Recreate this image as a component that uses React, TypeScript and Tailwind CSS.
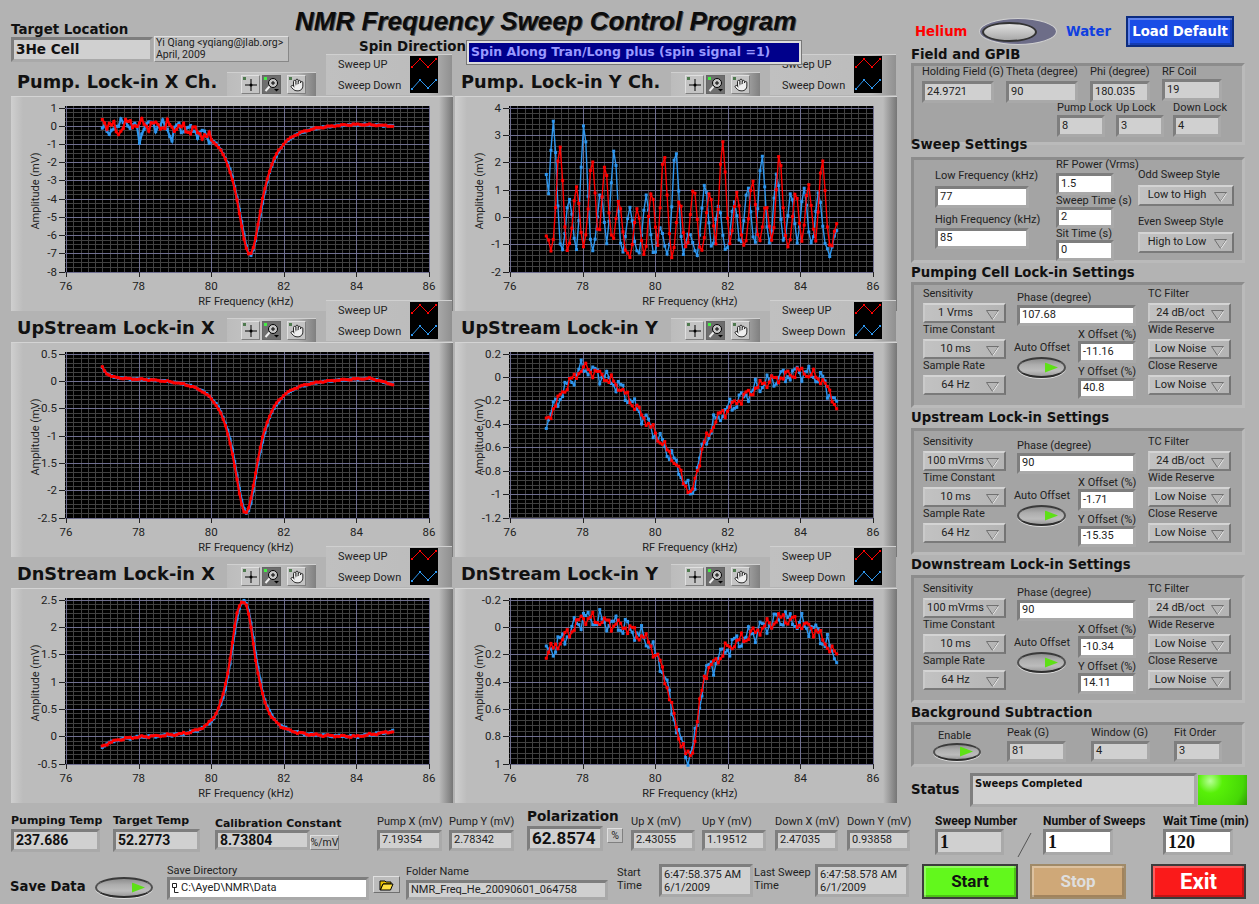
import { Hand } from 'lucide-react'

const FREQS = Array.from({ length: 126 }, (_, i) => 77 + i * 0.064)

const lerp = (knots: number[][], x: number) => {
  for (let i = 1; i < knots.length; i++) {
    if (x <= knots[i][0]) {
      const [a, b] = [knots[i - 1], knots[i]]
      return a[1] + ((x - a[0]) / (b[0] - a[0])) * (b[1] - a[1])
    }
  }
  return knots[knots.length - 1][1]
}

const wobble = (x: number, ph: number) => Math.sin(x * 17 + ph) * 0.55 + Math.sin(x * 43 + ph * 2) * 0.3 + Math.sin(x * 71 + ph * 3) * 0.15
const lorentz = (x: number, c: number, w: number, p = 2) => 1 / (1 + Math.abs((x - c) / w) ** p)
const dip = (x: number, c: number) => Math.exp(-(((x - c) / 0.08) ** 2))

const pumpX = (ph: number, dx: number) => (x: number) =>
  0.22 - 7.3 * lorentz(x - dx, 81.06, 0.42) - Math.max(0, x - 84) * 0.15 + wobble(x, ph) * (x < 80 ? 0.4 : 0.05) -
  (dx > 0 ? 0.9 * (dip(x, 77.2) + dip(x, 78.02)) + 0.6 * dip(x, 78.9) : 0.7 * dip(x, 77.42))
const upX = (ph: number, dx: number) => (x: number) =>
  0.08 - 2.5 * lorentz(x - dx, 80.95, 0.42) + 0.2 * Math.exp(-(x - 77) / 0.15) - Math.max(0, x - 84.4) * 0.2 + wobble(x, ph) * 0.015
const dnX = (ph: number, dx: number) => (x: number) =>
  -0.02 + 2.48 * lorentz(x - dx, 80.87, 0.4, 2.5) - 0.18 * Math.exp(-(x - 77) / 0.4) + 0.1 * Math.max(0, x - 84) + wobble(x, ph) * 0.025

const upYKnots = [[77, -0.38], [77.5, -0.1], [78, 0.08], [78.5, 0.02], [79, -0.08], [79.7, -0.35], [80.5, -0.7], [81, -1.02], [81.3, -0.6], [81.7, -0.35], [82.3, -0.2], [83, -0.05], [84, 0.05], [84.6, -0.02], [85, -0.25]]
const dnYKnots = [[77, 0.2], [77.5, 0.08], [78, -0.07], [79.2, 0], [79.8, 0.1], [80.2, 0.3], [80.6, 0.75], [80.85, 0.95], [81.05, 0.9], [81.35, 0.35], [82, 0.15], [83, 0], [83.5, -0.07], [84.4, 0.02], [85, 0.22]]
const upY = (ph: number, amp: number) => (x: number) => lerp(upYKnots, x) + wobble(x, ph) * amp
const dnY = (ph: number, amp: number) => (x: number) => lerp(dnYKnots, x) + wobble(x, ph) * amp

const redPeaks = [[77, -0.7], [77.37, 2.6], [77.83, 1.1], [78.26, 2.1], [78.62, 1.9], [79, 0.6], [79.5, 0.3], [79.9, 0.9], [80.24, 2.3], [80.67, 0.6], [81.06, 1.05], [81.5, 0.9], [81.86, 2.75], [82.25, 0.9], [82.68, 1.35], [83.05, 0.45], [83.42, 2.3], [83.87, 0.9], [84.22, 1.2], [84.6, 2.1], [85, -0.25]]
const bluePeaks = [[77, 1.55], [77.19, 3.5], [77.63, 0.65], [78.04, 3.4], [78.5, 0.9], [78.87, 2.45], [79.3, 0.35], [79.75, 0.8], [80.14, -0.4], [80.56, 2.45], [80.93, -0.6], [81.37, 1.2], [81.75, 0.4], [82.18, 0.55], [82.55, 1.1], [82.94, 2.25], [83.35, 1.6], [83.74, 0.9], [84.1, 1.05], [84.5, 0.9], [85, -0.5]]
const spikes = (peaks: number[][], ph: number) => (x: number) => {
  const base = -1.35 + wobble(x, ph) * 0.25 - (x < 80.8 && x > 79 ? 0.2 : 0)
  return Math.max(base, ...peaks.map(([c, p]) => base + (p - base) * Math.exp(-(((x - c) / 0.125) ** 2))))
}

type PlotProps = {
  ticks: number[]
  sub: number
  down: (x: number) => number
  up: (x: number) => number
  thick?: boolean
}

function Plot({ ticks, sub, down, up, thick }: PlotProps) {
  const x0 = 55
  const x1 = 418
  const y0 = 10.5
  const y1 = 174.5
  const top = ticks[0]
  const bottom = ticks[ticks.length - 1]
  const sx = (v: number) => x0 + ((v - 76) / 10) * (x1 - x0)
  const sy = (v: number) => y0 + ((top - v) / (bottom - top)) * (y0 - y1)
  const xTicks = [76, 78, 80, 82, 84, 86]
  const rowH = (y1 - y0) / (ticks.length - 1) / sub
  const minorY = Array.from({ length: (ticks.length - 1) * sub + 1 }, (_, i) => Math.round(y0 + i * rowH) + 0.5)
  const minorX = Array.from({ length: 51 }, (_, i) => Math.round(x0 + (i * (x1 - x0)) / 50) + 0.5)
  const line = (fn: (x: number) => number) => FREQS.map((f) => `${sx(f).toFixed(1)},${sy(fn(f)).toFixed(1)}`).join(' ')
  const trace = (fn: (x: number) => number, color: string) => (
    <g>
      <polyline points={line(fn)} fill="none" stroke={color} strokeWidth={thick ? 2.2 : 1.4} />
      {FREQS.map((f) => (
        <rect key={f} x={sx(f) - 1.5} y={sy(fn(f)) - 1.5} width={3} height={3} fill={color} />
      ))}
    </g>
  )
  return (
    <svg width={442} height={215} className="block">
      <rect x={54} y={9} width={365} height={166} fill="#000" />
      <g shapeRendering="crispEdges">
        {minorX.map((x) => (
          <line key={x} x1={x} x2={x} y1={9} y2={175} stroke="#414141" />
        ))}
        {minorY.map((y) => (
          <line key={y} x1={54} x2={419} y1={y} y2={y} stroke="#414141" />
        ))}
        {xTicks.map((t) => (
          <line key={t} x1={Math.round(sx(t)) + 0.5} x2={Math.round(sx(t)) + 0.5} y1={9} y2={175} stroke="#6f6f90" />
        ))}
        {ticks.map((t) => (
          <line key={t} x1={54} x2={419} y1={Math.round(sy(t)) + 0.5} y2={Math.round(sy(t)) + 0.5} stroke="#6f6f90" />
        ))}
        {xTicks.map((t) => (
          <line key={t} x1={Math.round(sx(t)) + 0.5} x2={Math.round(sx(t)) + 0.5} y1={175} y2={180} stroke="#222" />
        ))}
        {ticks.map((t) => (
          <line key={t} x1={48} x2={54} y1={Math.round(sy(t)) + 0.5} y2={Math.round(sy(t)) + 0.5} stroke="#222" />
        ))}
      </g>
      {trace(down, '#2e96ee')}
      {trace(up, '#ff0000')}
      {ticks.map((t) => (
        <text key={t} x={46} y={sy(t) + 4} textAnchor="end" fill="#222" className="text-[11.5px]">
          {t}
        </text>
      ))}
      {xTicks.map((t) => (
        <text key={t} x={sx(t)} y={193} textAnchor="middle" fill="#222" className="text-[11.5px]">
          {t}
        </text>
      ))}
      <text x={235} y={208} textAnchor="middle" fill="#222" className="text-[11px]">
        RF Frequency (kHz)
      </text>
      <text transform="translate(28 94) rotate(-90)" textAnchor="middle" fill="#222" className="text-[11px]">
        Amplitude (mV)
      </text>
    </svg>
  )
}

function ToolButton({ children, pressed }: { children: React.ReactNode; pressed?: boolean }) {
  return (
    <div
      className={
        pressed
          ? 'relative flex h-[19px] w-[19px] items-center justify-center border border-[#666] bg-[#6e6e6e]'
          : 'relative flex h-[19px] w-[19px] items-center justify-center border border-t-[#e0e0e0] border-l-[#e0e0e0] border-r-[#808080] border-b-[#808080] bg-[#c4c4c4]'
      }
    >
      {children}
    </div>
  )
}

function Toolbar() {
  return (
    <div className="mt-[7px] flex h-[24px] w-[89px] items-center gap-[2px] border-t border-t-[#d0d0d0] bg-[linear-gradient(90deg,#bcbcbc_0%,#c6c6c6_40%,#b0b0b0_80%,#808080_100%)] pl-[14px]">
      <ToolButton>
        <svg width="17" height="17" viewBox="0 0 17 17">
          <rect x="1" y="1" width="3" height="3" fill="#4f7a4f" />
          <path d="M9 3v12M3 9h12" stroke="#000" fill="none" />
          <circle cx="9" cy="9" r="1.5" fill="#000" />
        </svg>
      </ToolButton>
      <ToolButton pressed>
        <svg width="17" height="17" viewBox="0 0 17 17">
          <rect x="1" y="1" width="3" height="3" fill="#44ee44" />
          <circle cx="10" cy="7" r="4.5" fill="#c8c8c8" stroke="#000" />
          <path d="M8 7h4M10 5v4" stroke="#000" fill="none" />
          <path d="M6.5 10.5L2.5 15" stroke="#eee" strokeWidth="2" />
          <path d="M11 13h5l-2.500 2.500z" fill="#000" />
        </svg>
      </ToolButton>
      <div className="w-[2px]" />
      <ToolButton>
        <div className="absolute left-[1px] top-[1px] h-[3px] w-[3px] bg-[#4f7a4f]" />
        <Hand size={14} strokeWidth={1.4} color="#000" fill="#eee" />
      </ToolButton>
    </div>
  )
}

function Legend() {
  return (
    <div className="absolute left-[315px] top-[-11px] z-10 flex h-[41px] w-[126px] border-t border-t-[#d0d0d0] bg-[linear-gradient(90deg,#c0c0c0_0%,#bcbcbc_80%,#909090_100%)] pl-[12px] pt-[1px] text-[11px] leading-[21px] text-[#222]">
      <div className="-mt-[2px] w-[72px] whitespace-nowrap">
        <div>Sweep UP</div>
        <div>Sweep Down</div>
      </div>
      <svg width="28" height="37" className="bg-black">
        <polyline points="2,11 10,3 18,11 26,3" fill="none" stroke="#ff0000" />
        <path d="M1 10h2v2H1zM9 2h2v2H9zM17 10h2v2h-2zM25 2h2v2h-2z" fill="#ff0000" />
        <polyline points="2,33 10,24 18,32 26,24" fill="none" stroke="#2e96ee" />
        <path d="M1 32h2v2H1zM9 23h2v2H9zM17 31h2v2h-2zM25 23h2v2h-2z" fill="#2e96ee" />
      </svg>
    </div>
  )
}

function Graph({ title, ...plot }: PlotProps & { title: string }) {
  return (
    <div className="relative w-[442px]">
      <div className="flex h-[31px] w-[442px]">
        <div className={`${HEAD} mt-[3px] w-[216px] whitespace-nowrap pl-[6px] text-[17.75px] leading-[28px] text-[#111]`}>{title}</div>
        <Toolbar />
      </div>
      <Legend />
      <div className="h-[215px] w-[442px] border-t border-t-[#d4d4d4] bg-[linear-gradient(90deg,#cfcfcf_0px,#bcbcbc_12px,#bcbcbc_428px,#767676_442px)]">
        <Plot {...plot} />
      </div>
    </div>
  )
}

function Box({ value, className, white, textClass }: { value: string; className: string; white?: boolean; textClass?: string }) {
  return (
    <div
      className={`flex items-center whitespace-nowrap border-[3px] border-t-[#7e7e7e] border-l-[#7e7e7e] border-r-[#a9a9a9] border-b-[#a9a9a9] pl-[2px] ${white ? 'bg-white' : 'bg-[#d0d0d0]'} ${textClass ?? 'text-[11px] text-[#222]'} ${className}`}
    >
      {value}
    </div>
  )
}

function Label({ children, className }: { children: React.ReactNode; className?: string }) {
  return <div className={`h-[12px] whitespace-nowrap text-[11px] leading-[12px] text-[#222] ${className ?? ''}`}>{children}</div>
}

function Caret() {
  return (
    <svg width="13" height="10" viewBox="0 0 13 10" className="absolute right-[5px] top-[5px]">
      <path d="M0.500 0.500h12L6.500 9.500z" fill="none" stroke="#707070" />
      <path d="M12.500 1.500L7 9.500" stroke="#eee" fill="none" />
    </svg>
  )
}

function Select({ value, className }: { value: string; className?: string }) {
  return (
    <div
      className={`relative flex h-[20px] items-center border-2 border-t-[#d4d4d4] border-l-[#cacaca] border-r-[#747474] border-b-[#7a7a7a] bg-[linear-gradient(90deg,#c2c2c2,#b4b4b4)] pl-[2px] pr-[20px] text-[11px] text-[#222] ${className ?? ''}`}
    >
      <span className="w-full whitespace-nowrap text-center">{value}</span>
      <Caret />
    </div>
  )
}

function SelectStack({ items }: { items: string[][] }) {
  return (
    <div className="flex w-[83px] flex-col pt-[3px]">
      {items.map(([label, value]) => (
        <div key={label} className="h-[36px]">
          <Label className="mb-[3px]">{label}</Label>
          <Select value={value} className="w-[83px]" />
        </div>
      ))}
    </div>
  )
}

function LedButton({ className }: { className?: string }) {
  return (
    <div
      className={`relative rounded-[50%] border-2 border-t-[#3a3a3a] border-l-[#505050] border-r-[#505050] border-b-[#2e2e2e] bg-[linear-gradient(180deg,#8e8e8e,#aeaeae_35%,#bcbcbc_70%,#9c9c9c)] shadow-[0_1px_0_#dcdcdc] ${className ?? ''}`}
    >
      <svg width="15" height="11" viewBox="0 0 15 11" className="absolute right-[5px] top-1/2 -translate-y-1/2">
        <polygon points="1,0 14,5 1,10" fill="#5ee016" />
      </svg>
    </div>
  )
}

function LockIn({ sens, phase, xOff, yOff, className }: { sens: string; phase: string; xOff: string; yOff: string; className: string }) {
  return (
    <div className={`flex w-[334px] border-[3px] border-t-[#8c8c8c] border-l-[#8c8c8c] border-r-[#bababa] border-b-[#bababa] bg-[#a4a4a4] pl-[9px] ${className}`}>
      <SelectStack items={[['Sensitivity', sens], ['Time Constant', '10 ms'], ['Sample Rate', '64 Hz']]} />
      <div className="ml-[6px] w-[136px] pt-[7px]">
        <Label className="ml-[5px]">Phase (degree)</Label>
        <Box value={phase} white className="ml-[5px] mt-[1px] h-[21px] w-[119px]" />
        <div className="flex">
          <div className="w-[66px] pt-[16px]">
            <Label className="ml-[2px]">Auto Offset</Label>
            <LedButton className="ml-[5px] mt-[3px] h-[21px] w-[49px]" />
          </div>
          <div className="pt-[3px]">
            <Label>X Offset (%)</Label>
            <Box value={xOff} white className="h-[22px] w-[58px]" />
            <Label className="mt-[3px]">Y Offset (%)</Label>
            <Box value={yOff} white className="h-[21px] w-[58px]" />
          </div>
        </div>
      </div>
      <SelectStack items={[['TC Filter', '24 dB/oct'], ['Wide Reserve', 'Low Noise'], ['Close Reserve', 'Low Noise']]} />
    </div>
  )
}

function Section({ children, className }: { children: React.ReactNode; className: string }) {
  return (
    <div className={`${HEAD} relative z-10 flex items-center whitespace-nowrap text-[13.25px] leading-none text-[#111] ${className}`}>{children}</div>
  )
}

function Readout({ label, value, className, labelClass, boxClass, textClass }: { label: string; value: string; className: string; labelClass?: string; boxClass: string; textClass?: string }) {
  return (
    <div className={`shrink-0 ${className}`}>
      <Label className={labelClass}>{label}</Label>
      <Box value={value} className={boxClass} textClass={textClass} />
    </div>
  )
}

function RoundKey({ children, className }: { children: React.ReactNode; className: string }) {
  return (
    <div className={`flex items-center justify-center border-2 font-bold shadow-[inset_2px_2px_0_rgba(255,255,255,0.3),inset_-2px_-2px_0_rgba(0,0,0,0.22)] ${className}`}>
      {children}
    </div>
  )
}

const HEAD = "font-['DejaVu_Sans',sans-serif] font-bold"
const BIG = 'text-[14px] font-bold text-[#111]'
const SMALL = 'text-[11px] text-[#222]'
const TITLE11 = `${HEAD} !text-[11px] !text-[#111] mb-[2px]`
const STRONG12 = '!text-[12px] font-bold !text-[#111] mb-[2px]'
const SERIF = "font-['Liberation_Serif',serif] text-[18px] font-bold text-[#111]"

export default function App() {
  return (
    <div className="h-[904px] w-[1259px] overflow-hidden bg-[#b3b3b3] font-['Roboto',sans-serif]">
      <div className="flex h-[805px]">
        <div className="w-[911px] pl-[11px]">
          <div className="relative z-20 flex h-[65px]">
            <div className="w-[143px] pt-[22px]">
              <div className={`${HEAD} text-[13.4px] leading-[15px] text-[#111]`}>Target Location</div>
              <Box value="3He Cell" className={`${HEAD} h-[25px] w-[142px]`} textClass="text-[13.6px] text-[#111]" />
            </div>
            <div className="mt-[36px] h-[26px] w-[135px] border border-t-[#e0e0e0] border-l-[#e0e0e0] border-r-[#888] border-b-[#888] bg-[#c0c0c0] pl-[1px] text-[10.5px] leading-[12px] text-[#222]">
              Yi Qiang &lt;yqiang@jlab.org&gt;
              <br />
              April, 2009
            </div>
            <div className="ml-[6px]">
              <div className="h-[40px] whitespace-nowrap pt-[7px] font-['Liberation_Sans',sans-serif] text-[26px] font-bold italic leading-[28px] text-[#0c0c0c] [text-shadow:1px_1px_0_#555]">
                NMR Frequency Sweep Control Program
              </div>
              <div className="flex items-start pl-[64px]">
                <div className={`${HEAD} -mt-[2px] w-[108px] whitespace-nowrap text-[13.4px] leading-[18px] text-[#111]`}>Spin Direction</div>
                <div className={`${HEAD} mt-[1px] flex h-[23px] w-[334px] items-center border-2 border-[#dcdcdc] bg-[#00008b] pl-[2px] text-[12.5px] text-[#9a9aff] outline outline-[#777]`}>
                  Spin Along Tran/Long plus (spin signal =1)
                </div>
              </div>
            </div>
          </div>
          <div className="grid w-[886px] grid-cols-2 gap-x-[2px]">
            <Graph title="Pump. Lock-in X Ch." ticks={[1, 0, -1, -2, -3, -4, -5, -6, -7, -8]} sub={4} down={pumpX(2.4, 0.02)} up={pumpX(0, 0)} thick />
            <Graph title="Pump. Lock-in Y Ch." ticks={[4, 3, 2, 1, 0, -1, -2]} sub={5} down={spikes(bluePeaks, 1)} up={spikes(redPeaks, 0)} />
            <Graph title="UpStream Lock-in X" ticks={[0.5, 0, -0.5, -1, -1.5, -2, -2.5]} sub={6} down={upX(2, 0.025)} up={upX(0, 0)} thick />
            <Graph title="UpStream Lock-in Y" ticks={[0.2, 0, -0.2, -0.4, -0.6, -0.8, -1, -1.2]} sub={5} down={upY(2.3, 0.09)} up={upY(0, 0.06)} />
            <Graph title="DnStream Lock-in X" ticks={[2.5, 2, 1.5, 1, 0.5, 0, -0.5]} sub={6} down={dnX(2, 0.025)} up={dnX(0, 0)} thick />
            <Graph title="DnStream Lock-in Y" ticks={[-0.2, 0, 0.2, 0.4, 0.6, 0.8, 1]} sub={5} down={dnY(2.3, 0.09)} up={dnY(0, 0.06)} />
          </div>
        </div>

        <div className="w-[336px]">
          <div className={`${HEAD} mt-[16px] flex h-[31px] items-center text-[13.25px]`}>
            <div className="ml-[4px] w-[64px] text-[#ff0000]">Helium</div>
            <div className="relative h-[27px] w-[78px] rounded-[50%] border border-[#d0d0d0] bg-[#6d6d88]">
              <div className="absolute left-[2px] top-[3px] h-[20px] w-[55px] rounded-[50%] border-2 border-[#333] bg-[linear-gradient(180deg,#e0e0e0,#a8a8a8)]" />
            </div>
            <div className="ml-[9px] w-[60px] text-[#1040e0]">Water</div>
            <RoundKey className="h-[31px] w-[108px] border-[#0c2c80] bg-[#1a4de6] text-[13.25px] text-white">Load Default</RoundKey>
          </div>
          <Section className="h-[16px]">Field and GPIB</Section>

          <div className="h-[82px] w-[334px] border-[3px] border-t-[#8c8c8c] border-l-[#8c8c8c] border-r-[#bababa] border-b-[#bababa] bg-[#a4a4a4]">
            <div className="flex items-start pl-[8px]">
              <Readout label="Holding Field (G)" value="24.9721" className="w-[84px]" labelClass="mb-[3px]" boxClass="h-[22px] w-[72px]" />
              <Readout label="Theta (degree)" value="90" className="w-[84px]" labelClass="mb-[3px]" boxClass="h-[22px] w-[72px]" />
              <Readout label="Phi (degree)" value="180.035" className="w-[72px]" labelClass="mb-[3px]" boxClass="h-[22px] w-[60px]" />
              <Readout label="RF Coil" value="19" className="w-[60px]" labelClass="mb-[1px]" boxClass="h-[22px] w-[60px]" />
            </div>
            <div className="-mt-[1px] flex items-start pl-[143px]">
              <Readout label="Pump Lock" value="8" className="w-[59px]" labelClass="mb-[1px]" boxClass="h-[22px] w-[48px]" />
              <Readout label="Up Lock" value="3" className="w-[57px]" labelClass="mb-[1px]" boxClass="h-[22px] w-[48px]" />
              <Readout label="Down Lock" value="4" className="w-[50px]" labelClass="mb-[1px]" boxClass="h-[22px] w-[48px]" />
            </div>
          </div>

          <Section className="-mt-[12px] h-[24px]">Sweep Settings</Section>
          <div className="flex h-[106px] w-[334px] border-[3px] border-t-[#8c8c8c] border-l-[#8c8c8c] border-r-[#bababa] border-b-[#bababa] bg-[#a4a4a4] pl-[21px]">
            <div className="w-[121px] pt-[10px]">
              <Label className="mb-[4px]">Low Frequency (kHz)</Label>
              <Box value="77" white className="h-[22px] w-[94px]" />
              <Label className="mb-[2px] mt-[6px]">High Frequency (kHz)</Label>
              <Box value="85" white className="h-[21px] w-[94px]" />
            </div>
            <div className="-mt-[1px] w-[82px]">
              <Label className="mb-[2px]">RF Power (Vrms)</Label>
              <Box value="1.5" white className="h-[22px] w-[58px]" />
              <Label>Sweep Time (s)</Label>
              <Box value="2" white className="h-[21px] w-[58px]" />
              <Label>Sit Time (s)</Label>
              <Box value="0" white className="h-[21px] w-[58px]" />
            </div>
            <div className="pt-[9px]">
              <Label className="mb-[4px]">Odd Sweep Style</Label>
              <Select value="Low to High" className="h-[21px] w-[96px]" />
              <Label className="mb-[4px] mt-[10px]">Even Sweep Style</Label>
              <Select value="High to Low" className="h-[21px] w-[96px]" />
            </div>
          </div>

          <Section className="h-[19px]">Pumping Cell Lock-in Settings</Section>
          <LockIn sens="1 Vrms" phase="107.68" xOff="-11.16" yOff="40.8" className="h-[126px]" />
          <Section className="h-[20px]">Upstream Lock-in Settings</Section>
          <LockIn sens="100 mVrms" phase="90" xOff="-1.71" yOff="-15.35" className="h-[127px] pt-[2px]" />
          <Section className="h-[20px]">Downstream Lock-in Settings</Section>
          <LockIn sens="100 mVrms" phase="90" xOff="-10.34" yOff="14.11" className="h-[128px] pt-[2px]" />
          <Section className="h-[19px]">Background Subtraction</Section>

          <div className="flex h-[45px] w-[334px] border-[3px] border-t-[#8c8c8c] border-l-[#8c8c8c] border-r-[#bababa] border-b-[#bababa] bg-[#a4a4a4] pl-[19px]">
            <div className="w-[74px] pt-[5px]">
              <Label className="mb-[1px] ml-[5px]">Enable</Label>
              <LedButton className="h-[18px] w-[48px]" />
            </div>
            <Readout label="Peak (G)" value="81" className="w-[84px] pt-[2px]" labelClass="mb-[2px]" boxClass="h-[21px] w-[59px]" />
            <Readout label="Window (G)" value="4" className="w-[83px] pt-[2px]" labelClass="mb-[2px]" boxClass="h-[21px] w-[59px]" />
            <Readout label="Fit Order" value="3" className="w-[50px] pt-[2px]" labelClass="mb-[2px]" boxClass="h-[21px] w-[48px]" />
          </div>

          <div className="mt-[6px] flex h-[34px] items-center">
            <div className={`${HEAD} w-[59px] text-[13.25px] text-[#111]`}>Status</div>
            <div className={`${HEAD} flex h-[34px] w-[227px] items-start border-[3px] border-t-[#7e7e7e] border-l-[#7e7e7e] border-r-[#a9a9a9] border-b-[#a9a9a9] bg-[#d0d0d0] pl-[2px] text-[10px] text-[#111]`}>
              Sweeps Completed
            </div>
            <div className="ml-[1px] h-[30px] w-[49px] bg-[radial-gradient(circle_at_25%_20%,#b8ff98_0%,#58f008_28%,#46d806_75%,#2f9a05_100%)]" />
          </div>
        </div>
      </div>

      <div className="flex h-[55px] items-start pl-[11px]">
        <Readout label="Pumping Temp" value="237.686" className="mt-[10px] w-[102px]" labelClass={TITLE11} boxClass="h-[23px] w-[89px]" textClass={BIG} />
        <Readout label="Target Temp" value="52.2773" className="mt-[10px] w-[102px]" labelClass={TITLE11} boxClass="h-[23px] w-[87px]" textClass={BIG} />
        <div className="mt-[13px] w-[162px] shrink-0">
          <Label className={`${HEAD} !text-[10.9px] !text-[#111]`}>Calibration Constant</Label>
          <div className="flex items-end">
            <Box value="8.73804" className="h-[20px] w-[95px]" textClass={BIG} />
            <div className="flex h-[15px] w-[29px] items-center justify-center border border-t-[#e0e0e0] border-l-[#e0e0e0] border-r-[#808080] border-b-[#808080] bg-[#c0c0c0] text-[10.5px] text-[#222]">%/mV</div>
          </div>
        </div>
        <Readout label="Pump X (mV)" value="7.19354" className="mt-[11px] w-[72px]" labelClass="mb-[2px]" boxClass="h-[21px] w-[65px]" textClass={SMALL} />
        <Readout label="Pump Y (mV)" value="2.78342" className="mt-[11px] w-[78px]" labelClass="mb-[2px]" boxClass="h-[21px] w-[65px]" textClass={SMALL} />
        <div className="mt-[3px] w-[104px] shrink-0">
          <div className={`${HEAD} h-[16px] whitespace-nowrap text-[13.6px] leading-[16px] text-[#111]`}>Polarization</div>
          <div className="mt-[2px] flex items-start">
            <Box value="62.8574" className="h-[25px] w-[76px]" textClass="text-[17px] font-bold text-[#111]" />
            <div className="ml-[4px] mt-[2px] flex h-[15px] w-[16px] items-center justify-center border border-t-[#e0e0e0] border-l-[#e0e0e0] border-r-[#808080] border-b-[#808080] bg-[#c0c0c0] text-[10.5px] text-[#222]">%</div>
          </div>
        </div>
        <Readout label="Up X (mV)" value="2.43055" className="mt-[11px] w-[71px]" labelClass="mb-[2px]" boxClass="h-[21px] w-[64px]" textClass={SMALL} />
        <Readout label="Up Y (mV)" value="1.19512" className="mt-[11px] w-[73px]" labelClass="mb-[2px]" boxClass="h-[21px] w-[64px]" textClass={SMALL} />
        <Readout label="Down X (mV)" value="2.47035" className="mt-[11px] w-[72px]" labelClass="mb-[2px]" boxClass="h-[21px] w-[63px]" textClass={SMALL} />
        <Readout label="Down Y (mV)" value="0.93858" className="mt-[11px] w-[88px]" labelClass="mb-[2px]" boxClass="h-[21px] w-[63px]" textClass={SMALL} />
        <Readout label="Sweep Number" value="1" className="mt-[10px] w-[82px]" labelClass={STRONG12} boxClass="h-[26px] w-[69px]" textClass={SERIF} />
        <svg width="16" height="26" className="mr-[10px] mt-[27px] shrink-0">
          <line x1="1" y1="25" x2="14" y2="1" stroke="#555" />
        </svg>
        <div className="mt-[10px] w-[120px] shrink-0">
          <Label className={STRONG12}>Number of Sweeps</Label>
          <Box value="1" white className="h-[26px] w-[70px]" textClass={SERIF} />
        </div>
        <div className="mt-[10px] w-[70px] shrink-0">
          <Label className={STRONG12}>Wait Time (min)</Label>
          <Box value="120" white className="h-[26px] w-[70px]" textClass={SERIF} />
        </div>
      </div>

      <div className="flex h-[44px] items-start pl-[10px]">
        <div className={`${HEAD} mt-[18px] w-[85px] text-[13.2px] leading-[18px] text-[#111]`}>Save Data</div>
        <LedButton className="mt-[17px] h-[21px] w-[58px] shrink-0" />
        <div className="ml-[14px] mt-[5px] w-[206px] shrink-0">
          <Label>Save Directory</Label>
          <div className="flex h-[23px] w-[202px] items-center border-[3px] border-t-[#7e7e7e] border-l-[#7e7e7e] border-r-[#a9a9a9] border-b-[#a9a9a9] bg-white pl-[2px] text-[11px] text-[#222]">
            <svg width="7" height="11" className="mr-[2px] shrink-0">
              <path d="M0.500 0.500h4v4h-4zM2.500 4.500v5h4" fill="none" stroke="#222" />
            </svg>
            C:\AyeD\NMR\Data
          </div>
        </div>
        <div className="mt-[16px] flex h-[17px] w-[27px] shrink-0 items-center justify-center border border-t-[#e0e0e0] border-l-[#e0e0e0] border-r-[#707070] border-b-[#707070] bg-[#bcbcbc]">
          <svg width="15" height="12" viewBox="0 0 15 12">
            <path d="M1 2h5l1 1h5v2H4L1.500 11H1z" fill="#e8c000" stroke="#000" />
            <path d="M4 5h10l-2.500 6H1.500z" fill="#ffe040" stroke="#000" />
          </svg>
        </div>
        <Readout label="Folder Name" value="NMR_Freq_He_20090601_064758" className="ml-[6px] mt-[6px] w-[211px]" labelClass="mb-[2px]" boxClass="h-[20px] w-[202px]" textClass={SMALL} />
        <div className="mt-[6px] w-[42px] shrink-0 text-[11px] leading-[13px] text-[#222]">
          Start
          <br />
          Time
        </div>
        <div className="mt-[4px] flex h-[33px] w-[94px] shrink-0 items-center whitespace-nowrap border-[3px] border-t-[#7e7e7e] border-l-[#7e7e7e] border-r-[#a9a9a9] border-b-[#a9a9a9] bg-[#d0d0d0] pl-[2px] text-[11px] leading-[13px] text-[#222]">
          <div>
            6:47:58.375 AM
            <br />
            6/1/2009
          </div>
        </div>
        <div className="ml-[1px] mt-[6px] w-[61px] shrink-0 text-[11px] leading-[13px] text-[#222]">
          Last Sweep
          <br />
          Time
        </div>
        <div className="mt-[4px] flex h-[33px] w-[94px] shrink-0 items-center whitespace-nowrap border-[3px] border-t-[#7e7e7e] border-l-[#7e7e7e] border-r-[#a9a9a9] border-b-[#a9a9a9] bg-[#d0d0d0] pl-[2px] text-[11px] leading-[13px] text-[#222]">
          <div>
            6:47:58.578 AM
            <br />
            6/1/2009
          </div>
        </div>
        <RoundKey className="ml-[13px] mt-[4px] h-[35px] w-[96px] shrink-0 border-[#3c3c3c] bg-[#62f81c] text-[17px] text-[#111]">Start</RoundKey>
        <RoundKey className="ml-[12px] mt-[4px] h-[35px] w-[96px] shrink-0 border-[#a08a68] bg-[#cfa878] text-[17px] text-[#dedede]">Stop</RoundKey>
        <RoundKey className="ml-[25px] mt-[4px] h-[35px] w-[95px] shrink-0 border-[#3c3c3c] bg-[#fa1a1a] text-[22px] text-white">Exit</RoundKey>
      </div>
    </div>
  )
}
